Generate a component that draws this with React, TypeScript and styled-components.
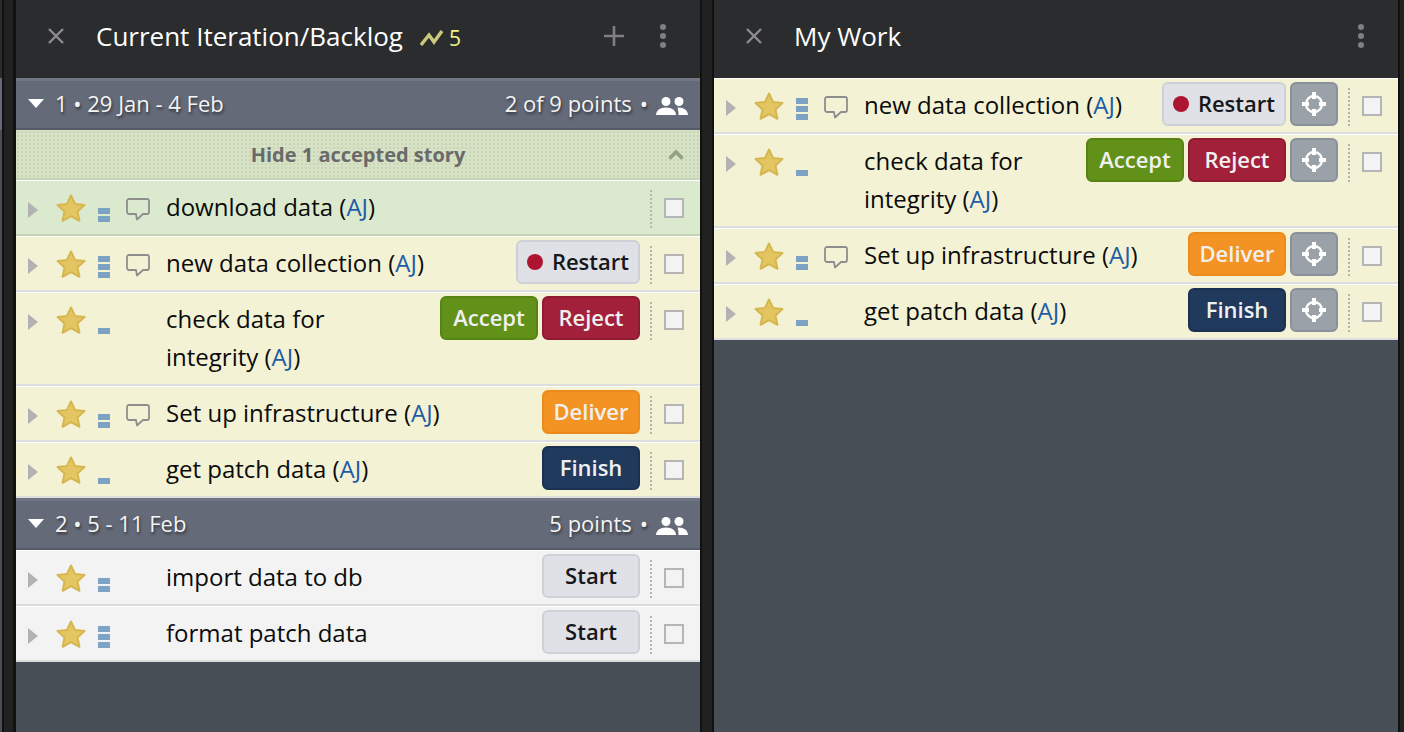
import type { ReactNode } from 'react';
import styled, { createGlobalStyle } from 'styled-components';

const GlobalStyle = createGlobalStyle`
  html, body {
    margin: 0;
    padding: 0;
    background: #212121;
    font-family: 'Open Sans', 'Noto Sans', sans-serif;
  }
`;

type Kind = 'restart' | 'accept' | 'reject' | 'deliver' | 'finish' | 'start';
type Tone = 'accepted' | 'active' | 'planned';

interface Story {
  title: string;
  owner?: string;
  points: number;
  comment?: boolean;
  actions: Kind[];
  tone: Tone;
}

const palette: Record<Kind, { bg: string; line: string; fg: string }> = {
  restart: { bg: '#e0e1e6', line: '#cdd0d6', fg: '#15171a' },
  start: { bg: '#e0e1e6', line: '#cdd0d6', fg: '#15171a' },
  accept: { bg: '#629119', line: '#578214', fg: '#f0f0f0' },
  reject: { bg: '#a3203a', line: '#8e1b32', fg: '#f0f0f0' },
  deliver: { bg: '#f39323', line: '#ec8b1b', fg: '#f0f0f0' },
  finish: { bg: '#203a5e', line: '#1a3151', fg: '#f0f0f0' },
};

const labels: Record<Kind, string> = {
  restart: 'Restart',
  start: 'Start',
  accept: 'Accept',
  reject: 'Reject',
  deliver: 'Deliver',
  finish: 'Finish',
};

const toneBg: Record<Tone, string> = {
  accepted: '#dbeace',
  active: '#f3f2d4',
  planned: '#f3f3f3',
};

const toneLine: Record<Tone, string> = {
  accepted: '#c5d4b5',
  active: '#dedede',
  planned: '#dcdcdc',
};

const backlogOne: Story[] = [
  { title: 'new data collection', owner: 'AJ', points: 3, comment: true, actions: ['restart'], tone: 'active' },
  { title: 'check data for integrity', owner: 'AJ', points: 1, actions: ['accept', 'reject'], tone: 'active' },
  { title: 'Set up infrastructure', owner: 'AJ', points: 2, comment: true, actions: ['deliver'], tone: 'active' },
  { title: 'get patch data', owner: 'AJ', points: 1, actions: ['finish'], tone: 'active' },
];

const backlogTwo: Story[] = [
  { title: 'import data to db', points: 2, actions: ['start'], tone: 'planned' },
  { title: 'format patch data', points: 3, actions: ['start'], tone: 'planned' },
];

const Page = styled.div`
  display: flex;
  width: 1404px;
  height: 100vh;
  overflow: hidden;
`;

const Sliver = styled.div`
  width: 2px;
  flex: none;
  background: linear-gradient(#2b2c2e 0 78px, #646a78 78px 130px, #484e56 130px);
`;

const Gutter = styled.div<{ $thick?: boolean }>`
  width: 14px;
  flex: none;
  box-sizing: border-box;
  background: #212121;
  border-left: 2px solid #111;
  border-right: ${(p) => (p.$thick ? 3 : 2)}px solid #111;
`;

const EndGutter = styled.div`
  flex: 1;
  background: #212121;
  border-left: 2px solid #111;
`;

const Panel = styled.section`
  width: 684px;
  flex: none;
  background: #484e56;
`;

const Header = styled.header`
  display: flex;
  align-items: center;
  height: 78px;
  padding: 0 34px 6px 32px;
  box-sizing: border-box;
  background: #2b2c2e;
`;

const Title = styled.h1`
  margin: 0 0 0 32px;
  font-size: 26px;
  font-weight: 400;
  color: #fff;
  white-space: nowrap;
`;

const Velocity = styled.div`
  display: flex;
  align-items: center;
  gap: 5px;
  margin-left: 17px;
  margin-top: 4px;
  font-size: 21px;
  color: #f1f18c;
`;

const Spacer = styled.div`
  flex: 1;
`;

const PlusIcon = styled.svg`
  margin-right: 36px;
  display: block;
`;

const CloseIcon = styled.svg`
  display: block;
  flex: none;
`;

const Kebab = styled.svg`
  display: block;
  flex: none;
`;

const SectionBar = styled.div`
  display: flex;
  align-items: center;
  height: 52px;
  padding: 0 12px 4px;
  box-sizing: border-box;
  background: #646a78;
  border-top: 3px solid #707683;
  border-bottom: 2px solid #545a66;
  color: #f4f4f4;
  font-size: 22px;
  text-shadow: 1px 2px 3px rgba(0, 0, 0, 0.55);
`;

const Caret = styled.div`
  width: 0;
  height: 0;
  margin: 2px 11px 0 0;
  border-left: 8px solid transparent;
  border-right: 8px solid transparent;
  border-top: 9px solid #fff;
`;

const SectionMeta = styled.div`
  margin-left: auto;
  display: flex;
  align-items: center;
  gap: 8px;
`;

const PeopleIcon = styled.svg`
  display: block;
  flex: none;
  margin-top: 6px;
`;

const Banner = styled.div`
  display: grid;
  grid-template-columns: 1fr auto 1fr;
  align-items: center;
  height: 50px;
  padding: 0 16px;
  box-sizing: border-box;
  background-color: #d6e1c6;
  background-image: radial-gradient(#c8d6b4 1px, transparent 1.2px);
  background-size: 4px 4px;
  border-bottom: 2px solid #c5d4b2;
  font-size: 20px;
  font-weight: 700;
  color: #6a6a6a;

  span {
    grid-column: 2;
  }

  svg {
    grid-column: 3;
    justify-self: end;
  }
`;

const Row = styled.div<{ $tone: Tone }>`
  display: flex;
  align-items: flex-start;
  background: ${(p) => toneBg[p.$tone]};
  border-top: 1px solid #fff;
  border-bottom: 2px solid ${(p) => toneLine[p.$tone]};
`;

const Lead = styled.div`
  display: flex;
  align-items: flex-end;
  flex: none;
  width: 150px;
  height: 41px;
  padding-left: 12px;
  box-sizing: border-box;
`;

const Arrow = styled.div`
  width: 0;
  height: 0;
  margin-bottom: 4px;
  border-top: 8px solid transparent;
  border-bottom: 8px solid transparent;
  border-left: 10px solid #b2b2b4;
`;

const StarIcon = styled.svg`
  display: block;
  flex: none;
  margin-left: 18px;
`;

const Estimate = styled.div`
  display: flex;
  flex-direction: column;
  gap: 2px;
  width: 12px;
  flex: none;
  margin-left: 12px;
`;

const EstimateBar = styled.div`
  height: 6px;
  background: #7da3c4;
`;

const CommentIcon = styled.svg`
  display: block;
  flex: none;
  margin-left: 16px;
  margin-bottom: 1px;
`;

const StoryText = styled.div`
  flex: 1;
  min-width: 0;
  padding: 7px 24px 8px 0;
  font-size: 24px;
  line-height: 38px;
  color: #0b0b0b;
`;

const Owner = styled.span`
  color: #1f5ca6;
`;

const Actions = styled.div`
  display: flex;
  gap: 4px;
  flex: none;
  margin-top: 3px;
`;

const ActionButton = styled.button<{ $kind: Kind }>`
  display: flex;
  align-items: center;
  justify-content: center;
  gap: 9px;
  min-width: 98px;
  height: 44px;
  padding: 0 9px 2px;
  box-sizing: border-box;
  border: 2px solid ${(p) => palette[p.$kind].line};
  border-radius: 6px;
  background: ${(p) => palette[p.$kind].bg};
  color: ${(p) => palette[p.$kind].fg};
  font-family: inherit;
  font-size: 22px;
  font-weight: 600;
`;

const Dot = styled.span`
  width: 16px;
  height: 16px;
  margin-top: 2px;
  border-radius: 50%;
  background: #ae1530;
`;

const TargetButton = styled.button`
  display: flex;
  align-items: center;
  justify-content: center;
  width: 48px;
  height: 44px;
  padding: 0;
  box-sizing: border-box;
  border: 2px solid #8b9198;
  border-radius: 6px;
  background: #9ba1a8;
`;

const Tail = styled.div`
  display: flex;
  align-items: flex-start;
  gap: 12px;
  flex: none;
  width: 50px;
  margin-left: 10px;
`;

const Separator = styled.div`
  height: 38px;
  margin-top: 9px;
  border-left: 2px dotted #b5b5b5;
`;

const Checkbox = styled.div`
  width: 20px;
  height: 20px;
  margin-top: 17px;
  box-sizing: border-box;
  border: 2px solid #b5b5b5;
  background: #f3f3f3;
`;

const Star = () => (
  <StarIcon width="30" height="28" viewBox="0 0 30 28">
    <path
      d="M15 1.5l4 8.4 9.5 1.200-7 6.400 1.900 9.300L15 22.100l-8.400 4.700 1.900-9.300-7-6.400 9.500-1.200z"
      fill="#e3c662"
      stroke="#d6b650"
      strokeWidth="2"
      strokeLinejoin="round"
    />
  </StarIcon>
);

const Comment = () => (
  <CommentIcon width="24" height="23" viewBox="0 0 24 23">
    <path
      d="M3 1h18a2 2 0 0 1 2 2v11a2 2 0 0 1-2 2h-4l-6 5.5-1-5.5H3a2 2 0 0 1-2-2V3a2 2 0 0 1 2-2z"
      fill="none"
      stroke="#8e8e8e"
      strokeWidth="1.8"
      strokeLinejoin="round"
    />
  </CommentIcon>
);

const Target = () => (
  <svg width="24" height="24" viewBox="0 0 24 24">
    <circle cx="12" cy="12" r="8" fill="none" stroke="#fff" strokeWidth="2.4" />
    <path d="M10 0h4v7h-4zM10 17h4v7h-4zM0 10h7v4H0zM17 10h7v4h-7z" fill="#fff" />
  </svg>
);

const People = () => (
  <PeopleIcon width="32" height="18" viewBox="0 0 32 18">
    <circle cx="10" cy="4.5" r="4.5" fill="#fff" />
    <circle cx="23" cy="4.5" r="4.5" fill="#fff" />
    <path d="M0 18c0-4.500 4-7.500 10-7.500S20 13.500 20 18z" fill="#fff" />
    <path d="M21.500 10.600c5.500-.6 10.500 2.400 10.500 7.400h-9.500c0-2.800-.2-5.200-1-7.400z" fill="#fff" />
  </PeopleIcon>
);

const Plus = () => (
  <PlusIcon width="20" height="20" viewBox="0 0 20 20">
    <path d="M10 0v20M0 10h20" stroke="#808082" strokeWidth="2.6" />
  </PlusIcon>
);

const StoryRow = ({ story, target }: { story: Story; target?: boolean }) => (
  <Row $tone={story.tone}>
    <Lead>
      <Arrow />
      <Star />
      <Estimate>
        {Array.from({ length: story.points }, (_, i) => (
          <EstimateBar key={i} />
        ))}
      </Estimate>
      {story.comment && <Comment />}
    </Lead>
    <StoryText>
      {story.title}
      {story.owner && (
        <>
          {' ('}
          <Owner>{story.owner}</Owner>)
        </>
      )}
    </StoryText>
    <Actions>
      {story.actions.map((kind) => (
        <ActionButton key={kind} $kind={kind}>
          {kind === 'restart' && <Dot />}
          {labels[kind]}
        </ActionButton>
      ))}
      {target && (
        <TargetButton>
          <Target />
        </TargetButton>
      )}
    </Actions>
    <Tail>
      <Separator />
      <Checkbox />
    </Tail>
  </Row>
);

const PanelHeader = ({ title, badge, tools }: { title: string; badge?: ReactNode; tools?: ReactNode }) => (
  <Header>
    <CloseIcon width="16" height="16" viewBox="0 0 16 16">
      <path d="M1 1l14 14M15 1L1 15" stroke="#8d8d8f" strokeWidth="2.4" />
    </CloseIcon>
    <Title>{title}</Title>
    {badge}
    <Spacer />
    {tools}
    <Kebab width="6" height="24" viewBox="0 0 6 24">
      <circle cx="3" cy="3" r="3" fill="#808082" />
      <circle cx="3" cy="12" r="3" fill="#808082" />
      <circle cx="3" cy="21" r="3" fill="#808082" />
    </Kebab>
  </Header>
);

export default function App() {
  return (
    <Page>
      <GlobalStyle />
      <Sliver />
      <Gutter $thick />
      <Panel>
        <PanelHeader
          title="Current Iteration/Backlog"
          badge={
            <Velocity>
              <svg width="24" height="18" viewBox="0 0 24 18">
                <path d="M1 16L9 6l5 7 8-11" fill="none" stroke="#c9c97c" strokeWidth="3.4" />
              </svg>
              5
            </Velocity>
          }
          tools={<Plus />}
        />
        <SectionBar>
          <Caret />1 • 29 Jan - 4 Feb
          <SectionMeta>
            <span>2 of 9 points</span>
            <span>•</span>
            <People />
          </SectionMeta>
        </SectionBar>
        <Banner>
          <span>Hide 1 accepted story</span>
          <svg width="16" height="11" viewBox="0 0 16 11">
            <path d="M1.5 9.5L8 3l6.5 6.5" fill="none" stroke="#8fa37c" strokeWidth="3.5" />
          </svg>
        </Banner>
        <StoryRow
          story={{ title: 'download data', owner: 'AJ', points: 2, comment: true, actions: [], tone: 'accepted' }}
        />
        {backlogOne.map((story) => (
          <StoryRow key={story.title} story={story} />
        ))}
        <SectionBar>
          <Caret />2 • 5 - 11 Feb
          <SectionMeta>
            <span>5 points</span>
            <span>•</span>
            <People />
          </SectionMeta>
        </SectionBar>
        {backlogTwo.map((story) => (
          <StoryRow key={story.title} story={story} />
        ))}
      </Panel>
      <Gutter />
      <Panel>
        <PanelHeader title="My Work" />
        {backlogOne.map((story) => (
          <StoryRow key={story.title} story={story} target />
        ))}
      </Panel>
      <EndGutter />
    </Page>
  );
}
